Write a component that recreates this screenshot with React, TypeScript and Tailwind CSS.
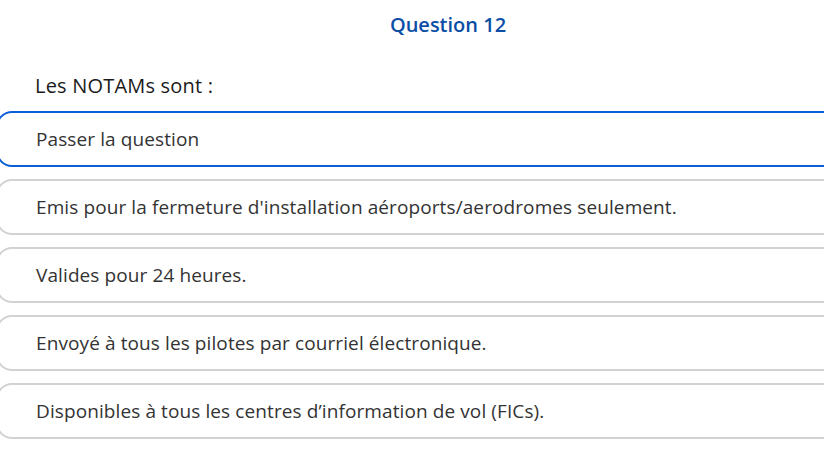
const options = [
  "Passer la question",
  "Emis pour la fermeture d'installation aéroports/aerodromes seulement.",
  "Valides pour 24 heures.",
  "Envoyé à tous les pilotes par courriel électronique.",
  "Disponibles à tous les centres d’information de vol (FICs).",
];

export default function App() {
  return (
    <div
      className="h-[455px] w-[824px] overflow-hidden bg-white"
      style={{ fontFamily: '"Open Sans", sans-serif' }}
    >
      <div className="ml-[-4px] w-[904px]">
        <h1 className="pt-[10px] text-center text-[20px] font-semibold leading-[30px] text-[#0b4ea6]">
          Question 12
        </h1>
        <p className="mt-[33px] pl-[39px] text-[20px] leading-[26px] tracking-[0.2px] text-[#1a1a1a]">
          Les NOTAMs sont :
        </p>
        <div className="mt-[12px] flex flex-col gap-[12px]">
          {options.map((o, i) => (
            <div
              key={o}
              className={
                i === 0
                  ? "flex h-[56px] items-center rounded-[16px] border-2 border-[#0a5fd8] pl-[38px] text-[19px] tracking-[0.1px] text-[#333333]"
                  : "flex h-[56px] items-center rounded-[16px] border-2 border-[#d2d2d2] pl-[38px] text-[19px] tracking-[0.1px] text-[#333333]"
              }
            >
              {o}
            </div>
          ))}
        </div>
      </div>
    </div>
  );
}
